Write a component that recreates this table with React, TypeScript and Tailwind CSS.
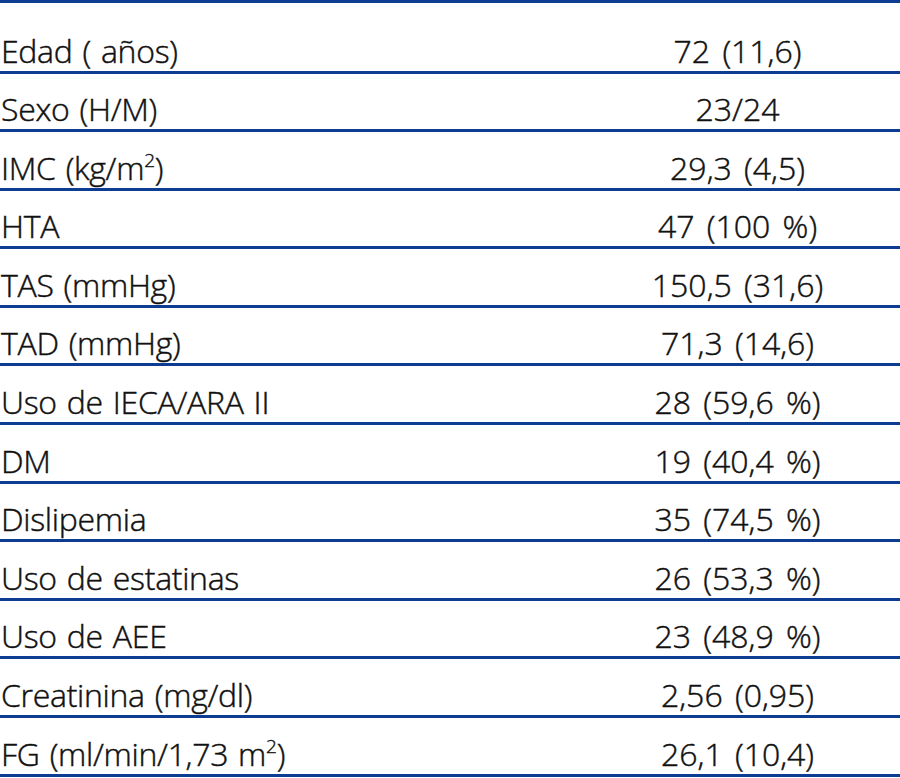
import React from "react";

const Sup = () => <span className="text-[19px] align-[13px]">2</span>;

const rows: [React.ReactNode, string][] = [
  ["Edad ( años)", "72 (11,6)"],
  ["Sexo (H/M)", "23/24"],
  [<>IMC (kg/m<Sup />)</>, "29,3 (4,5)"],
  ["HTA", "47 (100 %)"],
  ["TAS (mmHg)", "150,5 (31,6)"],
  ["TAD (mmHg)", "71,3 (14,6)"],
  ["Uso de IECA/ARA II", "28 (59,6 %)"],
  ["DM", "19 (40,4 %)"],
  ["Dislipemia", "35 (74,5 %)"],
  ["Uso de estatinas", "26 (53,3 %)"],
  ["Uso de AEE", "23 (48,9 %)"],
  ["Creatinina (mg/dl)", "2,56 (0,95)"],
  [<>FG (ml/min/1,73 m<Sup />)</>, "26,1 (10,4)"],
];

export default function App() {
  return (
    <div
      className="w-[900px] h-[778px] bg-white text-[#111111] border-t-[3px] border-[#0d3d92]"
      style={{ fontFamily: '"Open Sans", "Noto Sans", sans-serif' }}
    >
      {rows.map(([label, value], i) => (
        <div
          key={i}
          className={`flex items-end border-b-[3px] border-[#0d3d92] text-[32px] font-light [-webkit-text-stroke:0.45px_#111111] leading-none pb-[4px] ${
            i === 0 ? "h-[70.5px]" : "h-[58.6px]"
          }`}
        >
          <div className="flex-1 pl-[1px] tracking-[-0.3px] [word-spacing:2px]">{label}</div>
          <div className="w-[325px] text-center tracking-[0px] [word-spacing:4px]">{value}</div>
        </div>
      ))}
    </div>
  );
}
